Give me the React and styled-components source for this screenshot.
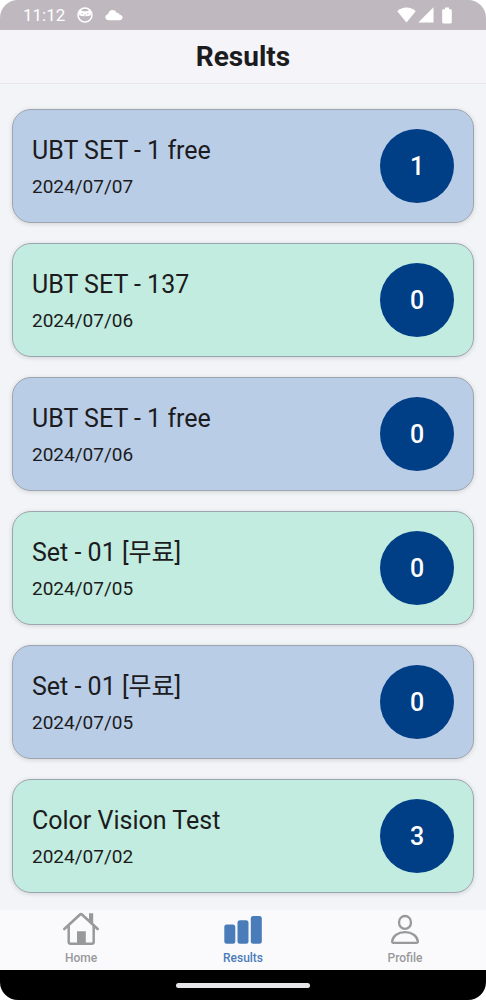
import React from "react";
import styled, { createGlobalStyle } from "styled-components";

const colors = {
  text: "#1b1b20",
  navy: "#003e86",
  blue: "#bacde7",
  mint: "#c2ecdf",
  active: "#4a7cba",
  muted: "#98999b",
};

const results = [
  { id: 1, title: "UBT SET - 1 free", date: "2024/07/07", score: 1 },
  { id: 2, title: "UBT SET - 137", date: "2024/07/06", score: 0 },
  { id: 3, title: "UBT SET - 1 free", date: "2024/07/06", score: 0 },
  { id: 4, title: "Set - 01 [무료]", date: "2024/07/05", score: 0 },
  { id: 5, title: "Set - 01 [무료]", date: "2024/07/05", score: 0 },
  { id: 6, title: "Color Vision Test", date: "2024/07/02", score: 3 },
];

const FaceIcon = () => (
  <svg width="16" height="16" viewBox="0 0 16 16" fill="none" aria-hidden="true">
    <circle cx="8" cy="8" r="7" stroke="#fff" strokeWidth="1.5" />
    <path
      d="M3.2 2.800 6 4.300h4l2.800-1.500 1.400 3.400-.6 2.300c-1.600.5-3.400.7-5.600.7s-4-.2-5.600-.7l-.6-2.300z"
      fill="#fff"
    />
    <path d="M4.600 6.300 6 7.100M11.400 6.300 10 7.100M7.300 8h1.400" stroke="#c0b8bf" />
  </svg>
);

const CloudIcon = () => (
  <svg width="18" height="12" viewBox="0 0 18 12" fill="#fff" aria-hidden="true">
    <path d="M4 11.2C1.8 11.2.4 9.9.4 8.2c0-1.5 1.1-2.7 2.6-2.9C3.700 2.600 5.200 1 7.500 1c2 0 3.500 1.200 4.100 3 .5-.2 1-.2 1.500 0 .9.3 1.400.9 1.600 1.800 1.700.2 2.900 1.300 2.900 2.800 0 1.500-1.200 2.600-2.900 2.600z" />
  </svg>
);

const WifiIcon = () => (
  <svg width="19" height="16" viewBox="0 0 19 16" fill="#fff" aria-hidden="true">
    <path d="M9.500 15.500.3 4.300C2.800 1.900 6 .6 9.500.6s6.700 1.300 9.200 3.700z" />
  </svg>
);

const SignalIcon = () => (
  <svg width="16" height="16" viewBox="0 0 16 16" fill="#fff" aria-hidden="true">
    <path d="M15.500.3v15.200H.3z" />
  </svg>
);

const BatteryIcon = () => (
  <svg width="10" height="17" viewBox="0 0 10 17" fill="#fff" aria-hidden="true">
    <path d="M3 .5h4v1.700h1.600c.7 0 1.200.5 1.200 1.200v11.900c0 .7-.5 1.200-1.200 1.200H1.400c-.7 0-1.200-.5-1.200-1.200V3.400c0-.7.5-1.200 1.200-1.200H3z" />
  </svg>
);

const HomeIcon = () => (
  <svg width="38" height="36" viewBox="0 0 38 36" fill="none" aria-hidden="true">
    <path
      d="M2.300 19 17.800 4.700a1.800 1.800 0 0 1 2.400 0L35.700 19"
      stroke="currentColor"
      strokeWidth="2.600"
      strokeLinecap="round"
    />
    <path
      d="M6.700 16v15.800a2 2 0 0 0 2 2h21a2 2 0 0 0 2-2V16"
      stroke="currentColor"
      strokeWidth="2.500"
    />
    <path d="M27 3.200h4.200v12L27 11.200zM15 21.300h8.800V34H15z" fill="currentColor" />
  </svg>
);

const BarsIcon = () => (
  <svg width="38" height="36" viewBox="0 0 38 36" fill="currentColor" aria-hidden="true">
    <rect x=".3" y="14.500" width="11" height="19.200" rx="2.500" />
    <rect x="13.500" y="10.200" width="11" height="23.500" rx="2.500" />
    <rect x="26.800" y="6" width="11" height="27.700" rx="2.500" />
  </svg>
);

const ProfileIcon = () => (
  <svg width="38" height="36" viewBox="0 0 38 36" fill="none" aria-hidden="true">
    <g stroke="currentColor" strokeWidth="2.300">
      <rect x="13.100" y="6" width="11.800" height="12.800" rx="5.900" />
      <path d="M7.500 32.800a1.300 1.300 0 0 1-1.400-1.500C6.800 26 12 22.100 19 22.100s12.200 3.900 12.900 9.200a1.300 1.300 0 0 1-1.400 1.500z" />
    </g>
  </svg>
);

const tabs = [
  { label: "Home", Icon: HomeIcon },
  { label: "Results", Icon: BarsIcon, active: true },
  { label: "Profile", Icon: ProfileIcon },
];

const App = () => (
  <>
    <GlobalStyle />
    <Screen>
      <StatusBar>
        <StatusGroup $gap="12px">
          <Clock>11:12</Clock>
          <FaceIcon />
          <CloudIcon />
        </StatusGroup>
        <StatusGroup $gap="2px">
          <WifiIcon />
          <SignalIcon />
          <Battery>
            <BatteryIcon />
          </Battery>
        </StatusGroup>
      </StatusBar>
      <Header>
        <Heading>Results</Heading>
      </Header>
      <List>
        {results.map((result, index) => (
          <Card key={result.id} $color={index % 2 ? colors.mint : colors.blue}>
            <div>
              <Title>{result.title}</Title>
              <Taken>{result.date}</Taken>
            </div>
            <Score>{result.score}</Score>
          </Card>
        ))}
      </List>
      <TabBar>
        {tabs.map(({ label, Icon, active }) => (
          <Tab
            key={label}
            href={`#${label.toLowerCase()}`}
            $active={active}
            aria-current={active ? "page" : undefined}
          >
            <Icon />
            {label}
          </Tab>
        ))}
      </TabBar>
      <GestureBar>
        <Handle />
      </GestureBar>
    </Screen>
  </>
);

export default App;

const GlobalStyle = createGlobalStyle`
  * {
    box-sizing: border-box;
  }

  body {
    margin: 0;
    background: #fff;
    color: ${colors.text};
    font-family: Roboto, "Noto Sans CJK KR", sans-serif;
  }
`;

const Screen = styled.div`
  display: flex;
  flex-direction: column;
  min-height: 100vh;
  overflow: hidden;
  border-radius: 18px;
  background: #f3f4f8;
`;

const StatusBar = styled.div`
  display: flex;
  justify-content: space-between;
  align-items: center;
  height: 30px;
  padding: 0 34px 0 23px;
  background: #c0b8bf;
  color: #fff;
`;

const StatusGroup = styled.div`
  display: flex;
  align-items: center;
  gap: ${(props) => props.$gap};
`;

const Battery = styled.span`
  display: flex;
  margin-left: 6px;
`;

const Clock = styled.span`
  font-size: 17px;
  line-height: 30px;
`;

const Header = styled.header`
  padding: 8px 0;
  border-bottom: 1px solid #e8e7ec;
  background: #f5f4f9;
  text-align: center;
`;

const Heading = styled.h1`
  margin: 0;
  font-size: 28px;
  font-weight: 700;
  line-height: 37px;
`;

const List = styled.ul`
  display: flex;
  flex: 1;
  flex-direction: column;
  gap: 20px;
  margin: 0;
  padding: 25px 12px 17px;
  list-style: none;
`;

const Card = styled.li`
  display: flex;
  justify-content: space-between;
  align-items: center;
  padding: 19px;
  border: 1px solid #9da5ae;
  border-radius: 19px;
  background: ${(props) => props.$color};
  box-shadow: 0 1px 5px rgba(0, 0, 0, 0.14);
`;

const Title = styled.h2`
  margin: 0;
  font-size: 25px;
  font-weight: 400;
  line-height: 42px;
`;

const Taken = styled.p`
  margin: 0;
  font-size: 19px;
  line-height: 30px;
`;

const Score = styled.span`
  display: flex;
  justify-content: center;
  align-items: center;
  width: 74px;
  height: 74px;
  border-radius: 50%;
  background: ${colors.navy};
  color: #fff;
  font-size: 25px;
  font-weight: 500;
`;

const TabBar = styled.nav`
  display: flex;
  background: #fafafc;
`;

const Tab = styled.a`
  display: flex;
  flex: 1;
  flex-direction: column;
  align-items: center;
  gap: 2px;
  padding-bottom: 2px;
  color: ${(props) => (props.$active ? colors.active : colors.muted)};
  font-size: 12px;
  font-weight: 500;
  line-height: 20px;
  text-decoration: none;
`;

const GestureBar = styled.div`
  display: flex;
  justify-content: center;
  align-items: center;
  height: 30px;
  background: #000;
`;

const Handle = styled.span`
  width: 134px;
  height: 5px;
  border-radius: 3px;
  background: #e6e6e8;
`;
